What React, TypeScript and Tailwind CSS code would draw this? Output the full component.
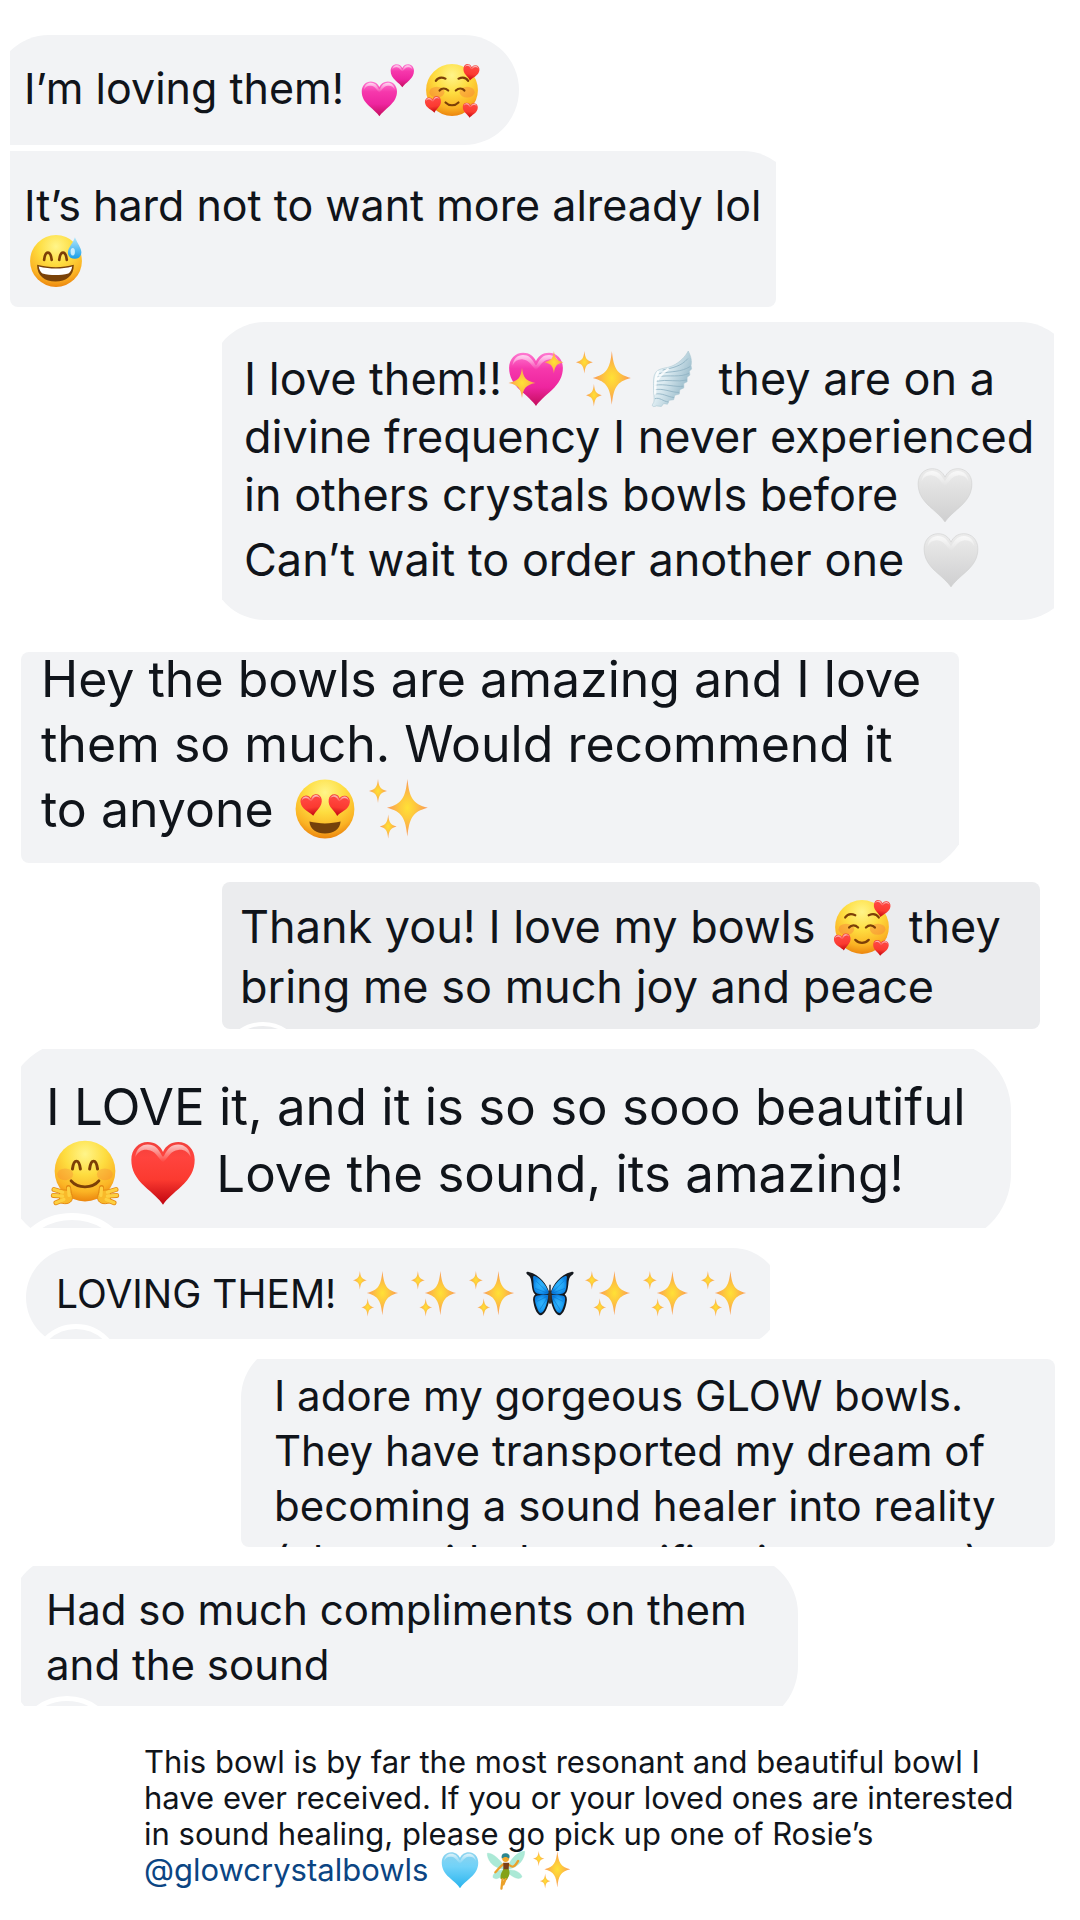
import type { ReactNode } from 'react';
import clsx from 'clsx';

const HEART =
  'M50 98C44 89 34 81 22 70C9 58 2 46 2 30C2 14 13 3 27 3C38 3 46 9 50 18C54 9 62 3 73 3C87 3 98 14 98 30C98 46 91 58 78 70C66 81 56 89 50 98Z';

function Gradients() {
  return (
    <svg className="absolute w-0 h-0" aria-hidden="true">
      <defs>
        <radialGradient id="face" cx="0.5" cy="0.22" r="0.8">
          <stop offset="0" stopColor="#fff58a" />
          <stop offset="0.42" stopColor="#fedd40" />
          <stop offset="0.78" stopColor="#fbb324" />
          <stop offset="1" stopColor="#ea800c" />
        </radialGradient>
        <radialGradient id="star">
          <stop offset="0" stopColor="#ffe136" />
          <stop offset="0.35" stopColor="#fecb3c" />
          <stop offset="1" stopColor="#f9975a" />
        </radialGradient>
        <linearGradient id="pink" x2="0" y2="1">
          <stop offset="0" stopColor="#ff7ad2" />
          <stop offset="0.3" stopColor="#f638ac" />
          <stop offset="0.65" stopColor="#ee259f" />
          <stop offset="1" stopColor="#c40d5c" />
        </linearGradient>
        <linearGradient id="red" x2="0" y2="1">
          <stop offset="0" stopColor="#f2403c" />
          <stop offset="0.25" stopColor="#ff443e" />
          <stop offset="0.6" stopColor="#fb3a30" />
          <stop offset="1" stopColor="#c00410" />
        </linearGradient>
        <linearGradient id="white" x2="0" y2="1">
          <stop offset="0" stopColor="#ececec" />
          <stop offset="0.4" stopColor="#e0e0e0" />
          <stop offset="1" stopColor="#cfcfd0" />
        </linearGradient>
        <linearGradient id="sky" x2="0" y2="1">
          <stop offset="0" stopColor="#8fd4ee" />
          <stop offset="0.4" stopColor="#71d2f8" />
          <stop offset="1" stopColor="#28b4ee" />
        </linearGradient>
        <linearGradient id="shine" x2="0" y2="1">
          <stop offset="0" stopColor="#fff" stopOpacity="0.7" />
          <stop offset="1" stopColor="#fff" stopOpacity="0" />
        </linearGradient>
        <linearGradient id="drop" x2="0" y2="1">
          <stop offset="0" stopColor="#b5e8fb" />
          <stop offset="1" stopColor="#189ee9" />
        </linearGradient>
        <linearGradient id="wing" x1="0" y1="0" x2="1" y2="0.6">
          <stop offset="0" stopColor="#f6fbfd" />
          <stop offset="0.45" stopColor="#dcebf1" />
          <stop offset="1" stopColor="#8fb4c5" />
        </linearGradient>
        <radialGradient id="blue">
          <stop offset="0" stopColor="#33b4fb" />
          <stop offset="0.6" stopColor="#1fa3f6" />
          <stop offset="1" stopColor="#0b7fe0" />
        </radialGradient>
      </defs>
    </svg>
  );
}

function Star({ x, y, rx, ry }: { x: number; y: number; rx: number; ry: number }) {
  return (
    <path
      transform={`translate(${x} ${y}) scale(${rx} ${ry})`}
      d="M0-1C.1-.36.24-.14 1 0C.24.14.1.36 0 1C-.1.36-.24.14-1 0C-.24-.14-.1-.36 0-1Z"
      fill="url(#star)"
    />
  );
}

function Heart({ fill, transform }: { fill: string; transform?: string }) {
  return (
    <g transform={transform}>
      <path d={HEART} fill={fill} />
      <path
        d="M8 26C9 14 17 7 27 7C37 7 43 13 48 23C50 26 50 26 52 23C57 13 63 7 73 7C83 7 91 14 92 26C88 18 82 14 73 15C62 16 58 26 50 34C42 26 38 16 27 15C18 14 12 18 8 26Z"
        fill="url(#shine)"
      />
    </g>
  );
}

const drawings = {
  twoHearts: (
    <>
      <Heart fill="url(#pink)" transform="translate(0 32) scale(.68)" />
      <Heart fill="url(#pink)" transform="translate(54 1) scale(.45)" />
    </>
  ),
  adoring: (
    <>
      <circle cx="50" cy="50" r="48" fill="url(#face)" />
      <ellipse cx="22" cy="54" rx="14" ry="10" fill="#f5793b" opacity="0.4" />
      <ellipse cx="78" cy="54" rx="14" ry="10" fill="#f5793b" opacity="0.4" />
      <g fill="none" stroke="#7c3f07" strokeWidth="4" strokeLinecap="round">
        <path d="M20 33C24 27 31 26 38 29" />
        <path d="M62 29C69 26 76 27 80 33" />
        <path d="M27 51C31 46 38 46 43 51" />
        <path d="M57 51C62 46 69 46 73 51" />
        <path d="M38 73C45 80 55 80 62 73" />
      </g>
      <Heart fill="url(#red)" transform="translate(72 0) rotate(8) scale(.31)" />
      <Heart fill="url(#red)" transform="translate(-2 64) rotate(-8) scale(.31)" />
      <Heart fill="url(#red)" transform="translate(70 72) rotate(4) scale(.29)" />
    </>
  ),
  sweat: (
    <>
      <circle cx="50" cy="50" r="48" fill="url(#face)" />
      <g fill="none" stroke="#7c3f07" strokeWidth="5" strokeLinecap="round">
        <path d="M28 48C30 30 40 30 42 48" />
        <path d="M56 48C58 30 68 30 70 48" />
      </g>
      <path d="M15 57C38 63 62 63 83 57C83 78 69 88 49 88C29 88 15 78 15 57Z" fill="#7a4208" />
      <path d="M18 60C40 65 60 65 80 60C79 67 76 71 73 73C58 77 40 77 25 73C21 70 19 66 18 60Z" fill="#fff" />
      <path d="M85 6C90 18 97 26 97 34C97 42 91 46 85 46C78 46 72 42 72 34C72 26 81 18 85 6Z" fill="url(#drop)" />
      <ellipse cx="81" cy="33" rx="4" ry="7" fill="#e9faff" opacity="0.8" />
    </>
  ),
  sparklingHeart: (
    <>
      <Heart fill="url(#pink)" />
      <Star x={25} y={57} rx={24} ry={27} />
      <Star x={82} y={20} rx={17} ry={20} />
    </>
  ),
  sparkles: (
    <>
      <Star x={64} y={48} rx={34} ry={48} />
      <Star x={15} y={20} rx={15} ry={20} />
      <Star x={32} y={79} rx={14} ry={20} />
    </>
  ),
  wing: (
    <>
      <path
        d="M79 0C84 10 86 18 84 26L85 32L81 36L82 43L77 47L77 55L71 58L71 66L64 69L63 77L55 79L53 87L45 88L42 95L35 94L31 99L22 98C16 101 13 98 16 94C20 90 17 78 17 66C17 54 16 45 22 37C28 30 42 31 52 26C64 20 74 10 79 0Z"
        fill="url(#wing)"
        stroke="#a9c5d1"
        strokeWidth="1"
      />
      <g fill="none" stroke="#8fb2c2" strokeWidth="1.5" strokeLinecap="round">
        <path d="M78 14C66 28 50 30 34 34" />
        <path d="M82 28C66 38 50 36 28 40" />
        <path d="M80 40C64 48 46 42 24 46" />
        <path d="M76 52C60 56 42 50 22 54" />
        <path d="M70 63C56 65 38 58 20 61" />
        <path d="M62 74C48 74 34 66 20 69" />
        <path d="M53 83C42 82 32 74 20 77" />
        <path d="M43 91C34 90 28 82 20 85" />
      </g>
      <path d="M26 36C20 44 20 60 20 78M44 31C34 40 28 44 24 52" fill="none" stroke="#fff" strokeWidth="4" opacity="0.8" />
    </>
  ),
  whiteHeart: (
    <>
      <path d={HEART} fill="url(#white)" stroke="#cdcdcd" strokeWidth="1" />
      <path
        d="M8 26C9 14 17 7 27 7C37 7 43 13 50 26C57 13 63 7 73 7C83 7 91 14 92 26C88 18 82 14 73 15C62 16 58 26 50 34C42 26 38 16 27 15C18 14 12 18 8 26Z"
        fill="url(#shine)"
      />
    </>
  ),
  heartEyes: (
    <>
      <circle cx="50" cy="50" r="49" fill="url(#face)" />
      <Heart fill="url(#red)" transform="translate(7 28) rotate(-8) scale(.37)" />
      <Heart fill="url(#red)" transform="translate(57 23) rotate(8) scale(.37)" />
      <path d="M24 71C40 75 60 75 76 71C75 84 64 91 50 91C36 91 25 84 24 71Z" fill="#74410b" />
    </>
  ),
  hug: (
    <>
      <circle cx="50" cy="47" r="46" fill="url(#face)" />
      <ellipse cx="20" cy="52" rx="12" ry="9" fill="#f5793b" opacity="0.3" />
      <ellipse cx="80" cy="52" rx="12" ry="9" fill="#f5793b" opacity="0.3" />
      <g fill="none" stroke="#7c3f07" strokeWidth="4.5" strokeLinecap="round">
        <path d="M31 44C33 28 41 28 43 44" />
        <path d="M57 44C59 28 67 28 69 44" />
        <path d="M29 62C39 74 61 74 71 62" />
      </g>
      {[undefined, 'translate(100 0) scale(-1 1)'].map((side) => (
        <g key={side ?? 'left'} transform={side} fill="none" strokeLinecap="round">
          <g stroke="#e58b13" strokeWidth="7.5">
            <path d="M3 75L16 79" />
            <path d="M2 84L16 85" />
            <path d="M6 95L18 90" />
            <path d="M25 72L27 84" />
          </g>
          <path d="M12 78C20 72 31 78 31 87C31 95 23 99 12 95Z" fill="#f9b92a" stroke="#e58b13" strokeWidth="1.5" />
          <g stroke="#fdd041" strokeWidth="5">
            <path d="M3 75L16 79" />
            <path d="M2 84L16 85" />
            <path d="M6 95L18 90" />
            <path d="M25 73L26 84" />
          </g>
        </g>
      ))}
    </>
  ),
  redHeart: <Heart fill="url(#red)" />,
  butterfly: (
    <>
      {[undefined, 'translate(100 0) scale(-1 1)'].map((side) => (
        <g key={side ?? 'left'} transform={side}>
          <path
            d="M49 48C44 30 28 8 4 2C-2 0-3 4 1 8C8 12 9 18 10 27C11 36 12 46 18 51C14 54 12 60 14 68C16 80 20 92 28 96C36 98 44 84 49 62Z"
            fill="#15191f"
          />
          <path d="M48 48C43 33 32 18 17 11C11 10 14 16 14 24C14 36 15 46 22 49C32 52 42 52 48 48Z" fill="url(#blue)" />
          <path d="M47 52C36 51 26 52 19 55C15 60 18 70 21 78C24 87 27 92 31 91C38 88 43 74 47 52Z" fill="url(#blue)" />
          <path d="M47 48L20 22M47 49L18 38M46 54L22 66M46 56L28 84" stroke="#0867bd" strokeWidth="1" />
        </g>
      ))}
      <path d="M50 30V46" stroke="#15191f" strokeWidth="3" />
      <ellipse cx="50" cy="57" rx="4" ry="15" fill="#3a2f26" />
    </>
  ),
  skyHeart: <Heart fill="url(#sky)" />,
  fairy: (
    <>
      <g fill="#9de6cf" stroke="#86dac2" strokeWidth="1" opacity="0.85">
        <path d="M46 42C34 20 12 4 1 6C0 20 12 44 44 48Z" />
        <path d="M54 42C62 20 84 0 99 1C100 18 86 42 56 48Z" />
        <path d="M44 50C26 50 14 60 16 70C26 78 40 68 47 54Z" />
        <path d="M56 50C74 48 90 58 92 68C84 78 66 68 54 56Z" />
      </g>
      <path d="M44 34C34 40 30 48 22 56M57 36C68 46 74 40 82 26" fill="none" stroke="#eba12a" strokeWidth="6" strokeLinecap="round" />
      <circle cx="49" cy="20" r="9" fill="#f1a92f" />
      <path d="M39 20C36 8 44 5 50 6C57 6 62 12 58 20C52 14 46 14 39 20Z" fill="#2d8790" />
      <path d="M43 31H58L57 50L43 50Z" fill="#7c3f17" />
      <path d="M43 48H57C62 58 58 66 52 76L36 74C34 64 38 56 43 48Z" fill="#83a317" />
      <path d="M41 74L38 99M49 74L43 88" stroke="#eba12a" strokeWidth="6" strokeLinecap="round" />
    </>
  ),
};

interface EmojiProps {
  name: keyof typeof drawings;
  className: string;
}

function Emoji({ name, className }: EmojiProps) {
  return (
    <svg viewBox="0 0 100 100" role="img" aria-label={name} className={clsx('inline-block overflow-visible -my-2', className)}>
      {drawings[name]}
    </svg>
  );
}

interface BubbleProps {
  frame: string;
  className: string;
  reaction?: string;
  children: ReactNode;
}

// The frame crops the bubble, so its round corners can run past the visible edge.
function Bubble({ frame, className, reaction, children }: BubbleProps) {
  return (
    <div className={clsx('relative overflow-hidden max-w-full whitespace-nowrap', frame)}>
      <div className={clsx('bg-[#f2f3f5]', className)}>{children}</div>
      {reaction && <span className={clsx('absolute rounded-full border-white bg-[#f2f3f5]', reaction)} />}
    </div>
  );
}

const md = 'size-[54px] mx-[5px] align-[-5px]';
const lg = 'size-[56px] mx-[6px] align-[-4px]';
const xl = 'size-[60px] mx-[7px] align-[-4px]';
const sm = 'size-[46px] mx-[6px] align-[-1px]';
const xs = 'size-[38px] mx-1 align-[0px]';

export default function App() {
  return (
    <main className="flex flex-col items-start bg-white pt-[35px] pb-8 font-['Inter',sans-serif] text-[#10141a]">
      <Gradients />

      <Bubble
        frame="ml-[10px] w-[509px]"
        className="-ml-4 rounded-r-[55px] rounded-tl-[55px] pt-[26px] pb-[30px] pl-[30px] text-[43px] leading-[54px]"
      >
        <p>
          I’m loving them! <Emoji name="twoHearts" className={md} />
          <Emoji name="adoring" className={md} />
        </p>
      </Bubble>

      <Bubble
        frame="ml-[10px] mt-[6px] w-[766px] rounded-b-lg"
        className="-mr-[22px] rounded-tr-[55px] pt-[27px] pb-[21px] pl-[14px] text-[43px] leading-[54px]"
      >
        <p>
          It’s hard not to want more already lol
          <br />
          <Emoji name="sweat" className={md} />
        </p>
      </Bubble>

      <Bubble
        frame="ml-[222px] mt-[15px] w-[832px]"
        className="-ml-3 -mr-[21px] rounded-[55px] pt-[28px] pb-[31px] pl-[34px] text-[45px] leading-[58px]"
      >
        <p>
          I love them!!
          <Emoji name="sparklingHeart" className={lg} />
          <Emoji name="sparkles" className={lg} />
          <Emoji name="wing" className={lg} /> they are on a
          <br />
          divine frequency I never experienced
          <br />
          in others crystals bowls before <Emoji name="whiteHeart" className={lg} />
        </p>
        <p className="mt-[7px]">
          Can’t wait to order another one <Emoji name="whiteHeart" className={lg} />
        </p>
      </Bubble>

      <Bubble
        frame="ml-[21px] mt-8 w-[938px] rounded-lg"
        className="-mt-[5px] -mr-3 -mb-3 rounded-br-[70px] pb-[33px] pl-5 text-[50px] leading-[65px]"
      >
        <p>
          Hey the bowls are amazing and I love
          <br />
          them so much. Would recommend it
          <br />
          to anyone <Emoji name="heartEyes" className={xl} />
          <Emoji name="sparkles" className={xl} />
        </p>
      </Bubble>

      <Bubble
        frame="ml-[222px] mt-[19px] w-[818px] rounded-lg"
        className="bg-[#ebecee]! pt-[15px] pb-[12px] pl-[18px] text-[45px] leading-[60px]"
        reaction="left-[-1px] top-[140px] size-[84px] border-4 bg-[#ebecee]!"
      >
        <p>
          Thank you! I love my bowls <Emoji name="adoring" className={lg} /> they
          <br />
          bring me so much joy and peace
        </p>
      </Bubble>

      <Bubble
        frame="ml-[21px] mt-5 w-[990px]"
        className="-mt-2 -mb-4 -ml-4 rounded-[70px] pt-8 pb-[37px] pl-[41px] text-[51px] leading-[67px]"
        reaction="left-[-14px] top-[164px] size-[130px] border-[7px]"
      >
        <p>
          I LOVE it, and it is so so sooo beautiful
          <br />
          <Emoji name="hug" className="size-[66px] mx-[6px] align-[-6px]" />
          <Emoji name="redHeart" className="size-[66px] mx-[6px] align-[-6px]" /> Love the sound, its amazing!
        </p>
      </Bubble>

      <Bubble
        frame="ml-[26px] mt-5 w-[744px]"
        className="-mb-2 -mr-3 rounded-[50px] pt-[23px] pb-[30px] pl-[30px] text-[39px] leading-[46px]"
        reaction="left-[5px] top-[76px] size-[90px] border-[5px]"
      >
        <p>
          LOVING THEM! <Emoji name="sparkles" className={sm} />
          <Emoji name="sparkles" className={sm} />
          <Emoji name="sparkles" className={sm} />
          <Emoji name="butterfly" className={sm} />
          <Emoji name="sparkles" className={sm} />
          <Emoji name="sparkles" className={sm} />
          <Emoji name="sparkles" className={sm} />
        </p>
      </Bubble>

      <Bubble
        frame="ml-[241px] mt-5 w-[814px] h-[188px] rounded-r-lg rounded-bl-lg"
        className="-mt-4 rounded-tl-[55px] pt-[25px] pl-[33px] text-[42px] leading-[55px]"
      >
        <p>
          I adore my gorgeous GLOW bowls.
          <br />
          They have transported my dream of
          <br />
          becoming a sound healer into reality
          <br />
          (along with the certification course)
        </p>
      </Bubble>

      <Bubble
        frame="ml-[21px] mt-[19px] w-[777px]"
        className="-mt-3 -mb-5 -ml-3 rounded-[60px] pt-[28px] pb-[34px] pl-[37px] text-[42px] leading-[55px]"
        reaction="left-[-6px] top-[130px] size-[104px] border-[5px]"
      >
        <p>
          Had so much compliments on them
          <br />
          and the sound
        </p>
      </Bubble>

      <p className="ml-[144px] mt-[38px] whitespace-nowrap text-[31px] leading-[36px]">
        This bowl is by far the most resonant and beautiful bowl I
        <br />
        have ever received. If you or your loved ones are interested
        <br />
        in sound healing, please go pick up one of Rosie’s
        <br />
        <a href="#glowcrystalbowls" className="text-[#0b4583]">
          @glowcrystalbowls
        </a>{' '}
        <Emoji name="skyHeart" className={xs} />
        <Emoji name="fairy" className={xs} />
        <Emoji name="sparkles" className={xs} />
      </p>
    </main>
  );
}
